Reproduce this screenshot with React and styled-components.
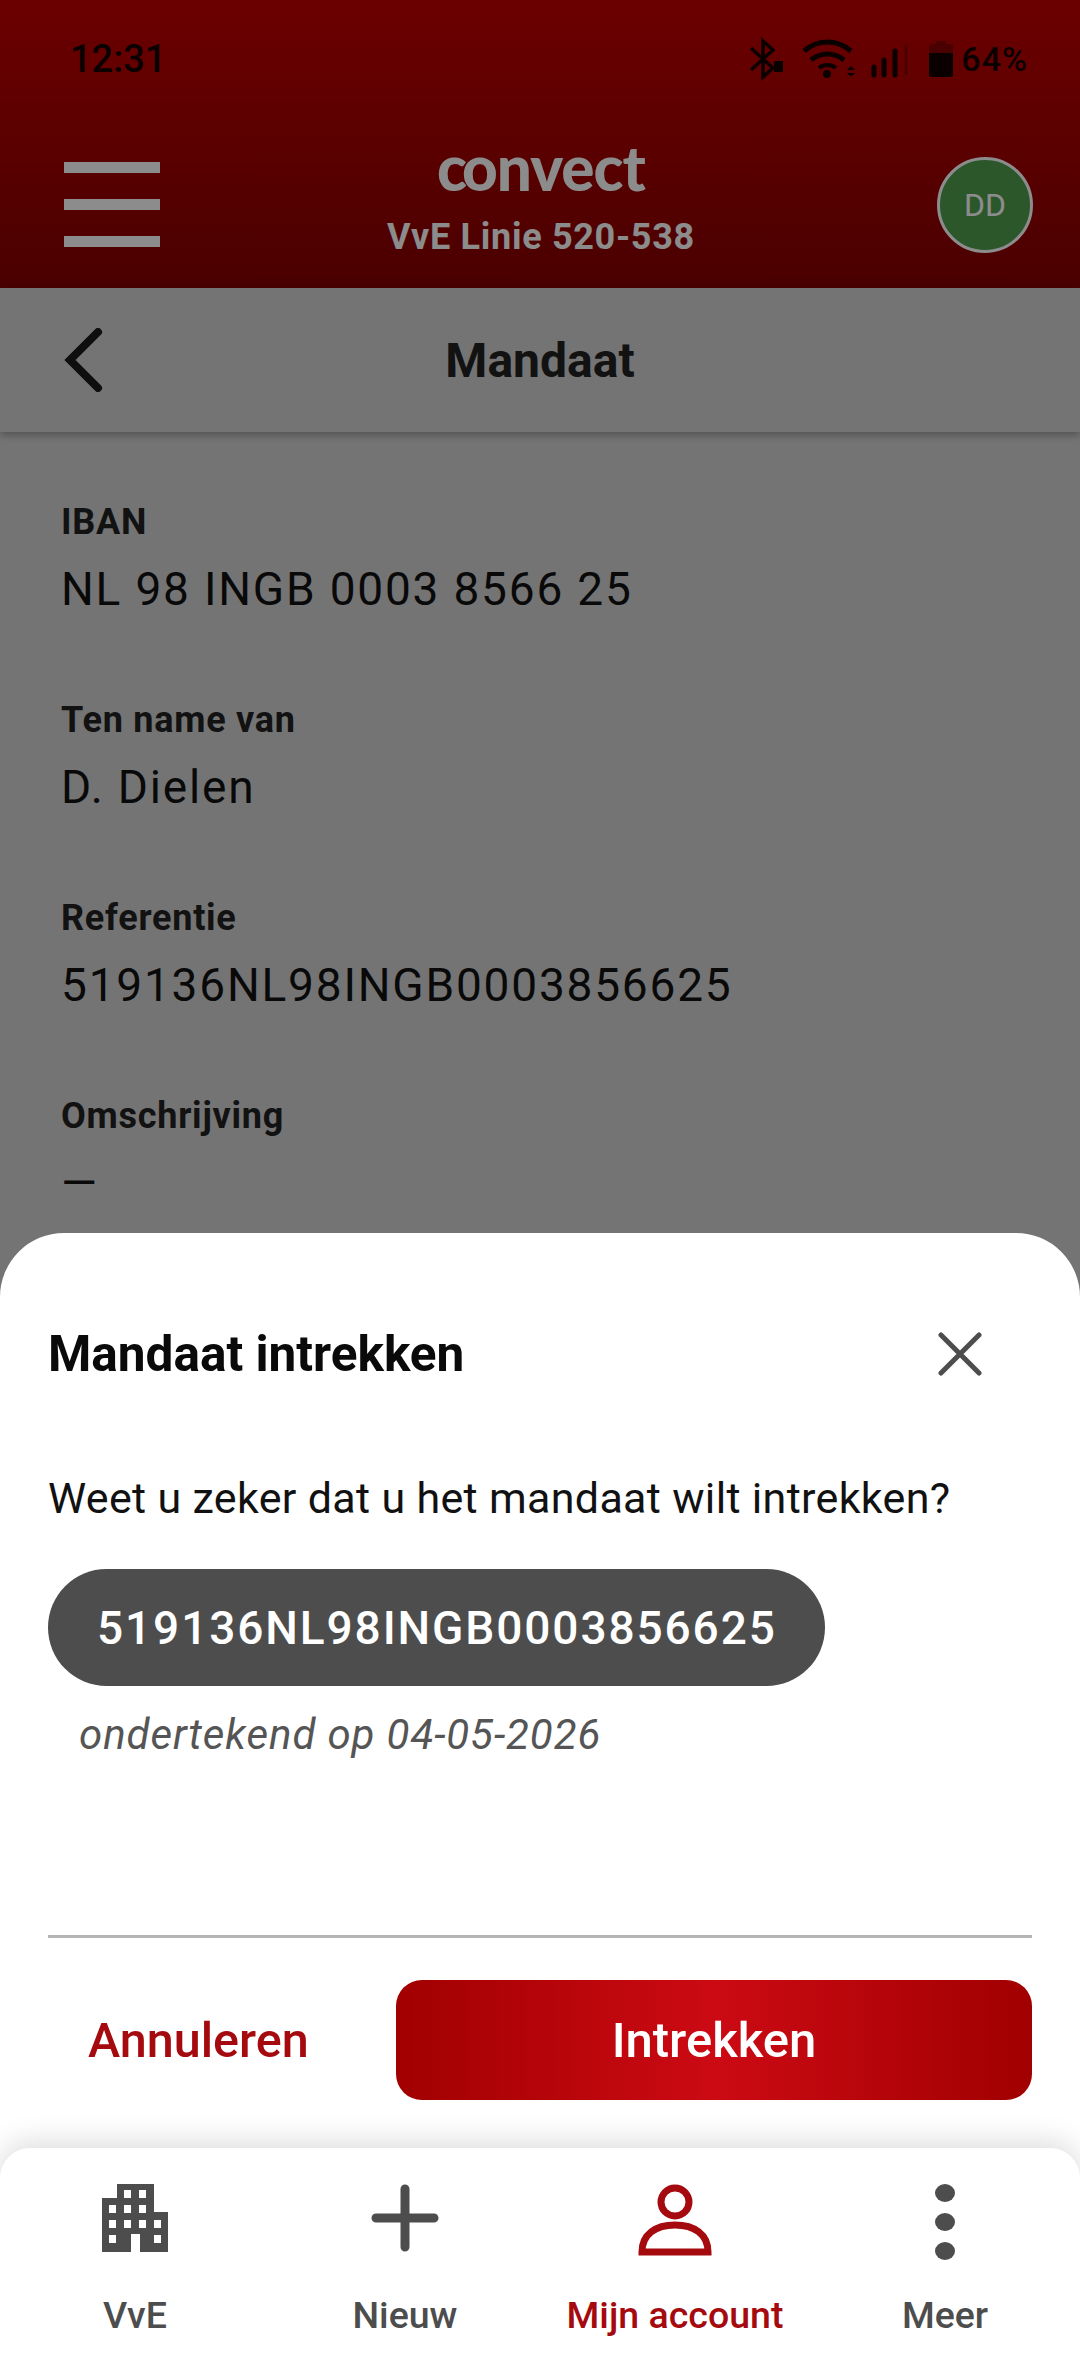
import React from 'react';
import styled, { createGlobalStyle } from 'styled-components';

const GlobalStyle = createGlobalStyle`
  html, body {
    margin: 0;
    padding: 0;
    font-family: Roboto, "Liberation Sans", sans-serif;
  }
  * {
    box-sizing: border-box;
  }
`;

const Page = styled.div`
  position: relative;
  width: 1080px;
  height: 2376px;
  overflow: hidden;
  display: flex;
  flex-direction: column;
  background: #d3d3d3;
`;

const Header = styled.header`
  height: 288px;
  flex-shrink: 0;
  display: flex;
  flex-direction: column;
  background: linear-gradient(180deg, #c40000 0%, #870000 100%);
`;

const StatusBar = styled.div`
  height: 118px;
  padding: 0 52px 0 70px;
  display: flex;
  align-items: center;
  justify-content: space-between;
  color: #140000;
  font-size: 38px;
  font-weight: 500;
`;

const StatusIcons = styled.div`
  display: flex;
  align-items: center;
`;

const BatteryIcon = styled.svg`
  margin-left: 15px;
`;

const Percent = styled.span`
  margin-left: 8px;
  font-size: 34px;
  letter-spacing: 1px;
`;

const TopBar = styled.div`
  flex: 1;
  display: grid;
  grid-template-columns: 160px 1fr 160px;
  align-items: center;
  padding: 0 48px 0 64px;
`;

const Burger = styled.div`
  width: 96px;
  display: flex;
  flex-direction: column;
  gap: 26px;
  margin-top: 2px;
  span {
    display: block;
    height: 11px;
    background: #fff;
  }
`;

const Brand = styled.div`
  display: flex;
  flex-direction: column;
  align-items: center;
  margin: -8px 0 0 -14px;
`;

const Logo = styled.div`
  color: #fff;
  font-family: Lato, sans-serif;
  font-weight: 900;
  font-size: 62px;
  line-height: 56px;
  letter-spacing: -1px;
`;

const LogoLink = styled.span`
  letter-spacing: -5px;
`;

const SiteName = styled.div`
  margin-top: 20px;
  color: #fff;
  font-size: 36px;
  line-height: 44px;
  font-weight: 700;
  letter-spacing: 0.7px;
`;

const Avatar = styled.div`
  justify-self: end;
  width: 96px;
  height: 96px;
  margin: 4px -1px 0 0;
  border-radius: 50%;
  border: 3px solid #fff;
  background: #4f9f4f;
  color: #fff;
  font-size: 32px;
  display: flex;
  align-items: center;
  justify-content: center;
`;

const SubHeader = styled.div`
  position: relative;
  height: 144px;
  flex-shrink: 0;
  display: flex;
  align-items: center;
  justify-content: center;
  background: #d3d3d3;
  box-shadow: 0 3px 8px rgba(0, 0, 0, 0.3);
`;

const BackButton = styled.div`
  position: absolute;
  left: 62px;
  top: 40px;
  display: flex;
`;

const SubTitle = styled.h1`
  margin: 0;
  color: #222;
  font-size: 48px;
  font-weight: 700;
`;

const Details = styled.div`
  padding: 69px 61px 0;
  display: flex;
  flex-direction: column;
  gap: 78px;
`;

const Field = styled.div`
  display: flex;
  flex-direction: column;
  gap: 14px;
`;

const Label = styled.div`
  color: #222;
  font-size: 36px;
  line-height: 42px;
  font-weight: 700;
  letter-spacing: 0.75px;
`;

const Value = styled.div`
  color: #111;
  font-size: 46px;
  line-height: 64px;
  letter-spacing: 1.8px;
`;

const Backdrop = styled.div`
  position: absolute;
  inset: 0;
  display: flex;
  flex-direction: column;
  justify-content: flex-end;
  padding-bottom: 190px;
  background: rgba(0, 0, 0, 0.45);
`;

const Sheet = styled.section`
  height: 953px;
  padding: 78px 48px 38px;
  display: flex;
  flex-direction: column;
  background: #fff;
  border-radius: 64px 64px 0 0;
`;

const SheetHead = styled.div`
  display: flex;
  align-items: center;
  justify-content: space-between;
  padding-right: 50px;
`;

const SheetTitle = styled.h2`
  margin: 0;
  color: #0a0a0a;
  font-size: 49.5px;
  line-height: 86px;
  font-weight: 700;
`;

const Question = styled.p`
  margin: 73px 0 0;
  color: #111;
  font-size: 43px;
  line-height: 56px;
  letter-spacing: 0.33px;
`;

const Chip = styled.div`
  align-self: flex-start;
  margin-top: 43px;
  height: 117px;
  padding: 0 48px 0 49px;
  display: flex;
  align-items: center;
  border-radius: 59px;
  background: #4d4d4d;
  color: #fff;
  font-size: 46px;
  font-weight: 500;
  letter-spacing: 1.9px;
`;

const Signed = styled.div`
  margin: 23px 0 0 31px;
  color: #555;
  font-size: 42px;
  line-height: 52px;
  font-style: italic;
  letter-spacing: 0.9px;
`;

const Actions = styled.div`
  margin-top: auto;
  height: 213px;
  padding-top: 42px;
  display: grid;
  grid-template-columns: 348px 1fr;
  align-items: start;
  border-top: 3px solid #b5b5b5;
`;

const CancelButton = styled.button`
  height: 120px;
  padding: 0 0 0 40px;
  border: 0;
  background: none;
  text-align: left;
  color: #a50a0f;
  font: 500 48.5px Roboto, sans-serif;
`;

const ConfirmButton = styled.button`
  height: 120px;
  border: 0;
  border-radius: 26px;
  background: linear-gradient(90deg, #a10000 0%, #cc0a14 50%, #a10000 100%);
  color: #fff;
  font: 500 49px Roboto, sans-serif;
`;

const BottomNav = styled.nav`
  position: relative;
  z-index: 2;
  margin-top: auto;
  height: 228px;
  display: grid;
  grid-template-columns: repeat(4, 270px);
  background: #fff;
  border-radius: 30px 30px 0 0;
  box-shadow: 0 -6px 30px rgba(0, 0, 0, 0.14);
`;

const NavItem = styled.div`
  display: flex;
  flex-direction: column;
  align-items: center;
  color: ${({ $active }) => ($active ? '#a50a0f' : '#4d4d4d')};
`;

const NavIcon = styled.div`
  height: 112px;
  padding-top: 36px;
  display: flex;
  justify-content: center;
`;

const NavLabel = styled.div`
  margin-top: 34px;
  font-size: 37.5px;
  line-height: 42px;
  font-weight: 500;
`;

const details = [
  ['IBAN', 'NL 98 INGB 0003 8566 25'],
  ['Ten name van', 'D. Dielen'],
  ['Referentie', '519136NL98INGB0003856625'],
  ['Omschrijving', '—'],
];

const BuildingIcon = () => (
  <svg width="66" height="68" viewBox="0 0 66 68" fill="currentColor">
    <path
      fillRule="evenodd"
      d="M15 0h37v14h-37zM0 14h52v14h14v40h-28v-18h-9v18h-29z
         M22 6v8h7v-8zM37 6v8h7v-8zM7 21v8h7v-8zM22 21v8h7v-8zM37 21v8h7v-8z
         M7 36v8h7v-8zM22 36v8h7v-8zM37 36v8h7v-8zM52 36v8h7v-8zM7 51v8h7v-8zM52 51v8h7v-8z"
    />
  </svg>
);

const PlusIcon = () => (
  <svg width="68" height="68" viewBox="0 0 68 68" stroke="currentColor" strokeWidth="9" strokeLinecap="round">
    <path d="M34 5v58M5 34h58" />
  </svg>
);

const PersonIcon = () => (
  <svg width="74" height="72" viewBox="0 0 74 72" fill="none" stroke="currentColor" strokeWidth="7">
    <circle cx="37" cy="18" r="14" />
    <path d="M4 68c0-18 14-27 33-27s33 9 33 27z" />
  </svg>
);

const DotsIcon = () => (
  <svg width="20" height="76" viewBox="0 0 20 76" fill="currentColor">
    <ellipse cx="10" cy="9" rx="10" ry="9" />
    <ellipse cx="10" cy="38" rx="10" ry="9" />
    <ellipse cx="10" cy="67" rx="10" ry="9" />
  </svg>
);

const nav = [
  { label: 'VvE', Icon: BuildingIcon },
  { label: 'Nieuw', Icon: PlusIcon },
  { label: 'Mijn account', Icon: PersonIcon, active: true },
  { label: 'Meer', Icon: DotsIcon },
];

const StatusGlyphs = () => (
  <svg width="168" height="44" viewBox="0 0 168 44" fill="none" stroke="currentColor">
    <path d="M5 11l22 20-10 9V4l10 9L5 33" strokeWidth="3.5" />
    <rect x="28" y="24" width="9" height="11" fill="currentColor" stroke="none" />
    <path d="M58 14c14-12 33-12 47 0" strokeWidth="5" />
    <path d="M65 23c10-8 23-8 33 0" strokeWidth="5" />
    <path d="M73 31c5-4 12-4 17 0" strokeWidth="4" />
    <circle cx="81" cy="37" r="4" fill="currentColor" stroke="none" />
    <path d="M105 29l-4 4h8zM105 40l-4-4h8z" fill="currentColor" stroke="none" />
    <path d="M128 38v-8M138 38v-15M149 38V14" strokeWidth="5" strokeLinecap="round" />
    <path d="M160 38V8" strokeWidth="3" opacity="0.25" />
  </svg>
);

export default function App() {
  return (
    <Page>
      <GlobalStyle />
      <Header>
        <StatusBar>
          <span>12:31</span>
          <StatusIcons>
            <StatusGlyphs />
            <BatteryIcon width="24" height="36" viewBox="0 0 24 36" fill="currentColor">
              <path d="M7 0h10v3h4a3 3 0 0 1 3 3v27a3 3 0 0 1-3 3H3a3 3 0 0 1-3-3V6a3 3 0 0 1 3-3h4z" opacity="0.3" />
              <path d="M0 12h24v21a3 3 0 0 1-3 3H3a3 3 0 0 1-3-3z" />
            </BatteryIcon>
            <Percent>64%</Percent>
          </StatusIcons>
        </StatusBar>
        <TopBar>
          <Burger>
            <span />
            <span />
            <span />
          </Burger>
          <Brand>
            <Logo><LogoLink>c</LogoLink>onvect</Logo>
            <SiteName>VvE Linie 520-538</SiteName>
          </Brand>
          <Avatar>DD</Avatar>
        </TopBar>
      </Header>
      <SubHeader>
        <BackButton>
          <svg width="44" height="64" viewBox="0 0 44 64" fill="none" stroke="#1a1a1a" strokeWidth="8" strokeLinecap="round">
            <path d="M36 4L8 32l28 28" />
          </svg>
        </BackButton>
        <SubTitle>Mandaat</SubTitle>
      </SubHeader>
      <Details>
        {details.map(([label, value]) => (
          <Field key={label}>
            <Label>{label}</Label>
            <Value>{value}</Value>
          </Field>
        ))}
      </Details>
      <Backdrop>
        <Sheet>
          <SheetHead>
            <SheetTitle>Mandaat intrekken</SheetTitle>
            <svg width="44" height="44" viewBox="0 0 44 44" stroke="#4d4d4d" strokeWidth="5" strokeLinecap="round">
              <path d="M3 3l38 38M41 3L3 41" />
            </svg>
          </SheetHead>
          <Question>Weet u zeker dat u het mandaat wilt intrekken?</Question>
          <Chip>519136NL98INGB0003856625</Chip>
          <Signed>ondertekend op 04-05-2026</Signed>
          <Actions>
            <CancelButton>Annuleren</CancelButton>
            <ConfirmButton>Intrekken</ConfirmButton>
          </Actions>
        </Sheet>
      </Backdrop>
      <BottomNav>
        {nav.map(({ label, Icon, active }) => (
          <NavItem key={label} $active={active}>
            <NavIcon>
              <Icon />
            </NavIcon>
            <NavLabel>{label}</NavLabel>
          </NavItem>
        ))}
      </BottomNav>
    </Page>
  );
}
